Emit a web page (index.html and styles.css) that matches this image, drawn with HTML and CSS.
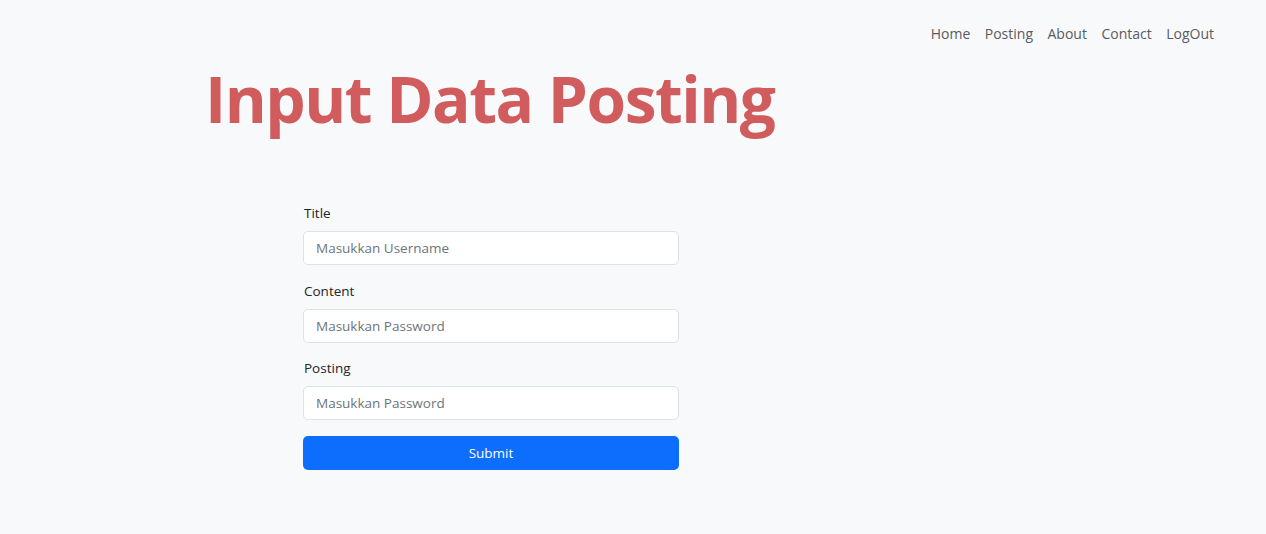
FILE: index.html
```html
<!DOCTYPE html>
<html lang="id">
<head>
<meta charset="utf-8">
<title>Input Data Posting</title>
<link rel="stylesheet" href="styles.css">
</head>
<body>
<nav class="navbar">
  <a href="#" class="nav-link">Home</a>
  <a href="#" class="nav-link">Posting</a>
  <a href="#" class="nav-link">About</a>
  <a href="#" class="nav-link">Contact</a>
  <a href="#" class="nav-link">LogOut</a>
</nav>
<header class="hero">
  <h1 class="title">Input Data Posting</h1>
</header>
<main class="form-wrap">
  <form class="post-form">
    <div class="field">
      <label class="form-label" for="title">Title</label>
      <input class="form-control" id="title" type="text" placeholder="Masukkan Username">
    </div>
    <div class="field">
      <label class="form-label" for="content">Content</label>
      <input class="form-control" id="content" type="text" placeholder="Masukkan Password">
    </div>
    <div class="field">
      <label class="form-label" for="posting">Posting</label>
      <input class="form-control" id="posting" type="text" placeholder="Masukkan Password">
    </div>
    <button class="btn-submit" type="button">Submit</button>
  </form>
</main>
</body>
</html>
```

FILE: styles.css
```css
* { box-sizing: border-box; }
html, body {
  margin: 0;
  padding: 0;
  background: #f8f9fa;
  font-family: "Open Sans", "Noto Sans", sans-serif;
  color: #212529;
}
.navbar {
  display: flex;
  justify-content: flex-end;
  gap: 14.5px;
  padding: 24px 52px 0 0;
  height: 58px;
}
.nav-link {
  font-size: 14px;
  line-height: 20px;
  color: #595c5f;
  text-decoration: none;
}
.hero {
  padding-left: 205px;
}
.title {
  margin: 0;
  font-size: 64px;
  line-height: 82px;
  font-weight: 700;
  color: #d05c5e;
  letter-spacing: -1.5px;
}
.form-wrap {
  padding: 63px 0 0 303px;
}
.post-form {
  width: 376px;
  display: flex;
  flex-direction: column;
}
.field {
  display: flex;
  flex-direction: column;
  margin-bottom: 15px;
}
.form-label {
  font-size: 13.5px;
  line-height: 20px;
  margin-bottom: 8px;
  color: #212529;
  padding-left: 1px;
}
.field + .field {
  margin-top: 0.5px;
}
.form-control {
  height: 34px;
  border: 1px solid #dee2e6;
  border-radius: 5px;
  background: #fff;
  padding: 0 12px;
  font-family: inherit;
  font-size: 13.5px;
  color: #212529;
  outline: none;
}
.form-control::placeholder {
  color: #6c757d;
}
.btn-submit {
  margin-top: 1px;
  height: 34px;
  border: none;
  border-radius: 5px;
  background: #0d6efd;
  color: #fff;
  font-family: inherit;
  font-size: 13.5px;
  cursor: pointer;
}
```
